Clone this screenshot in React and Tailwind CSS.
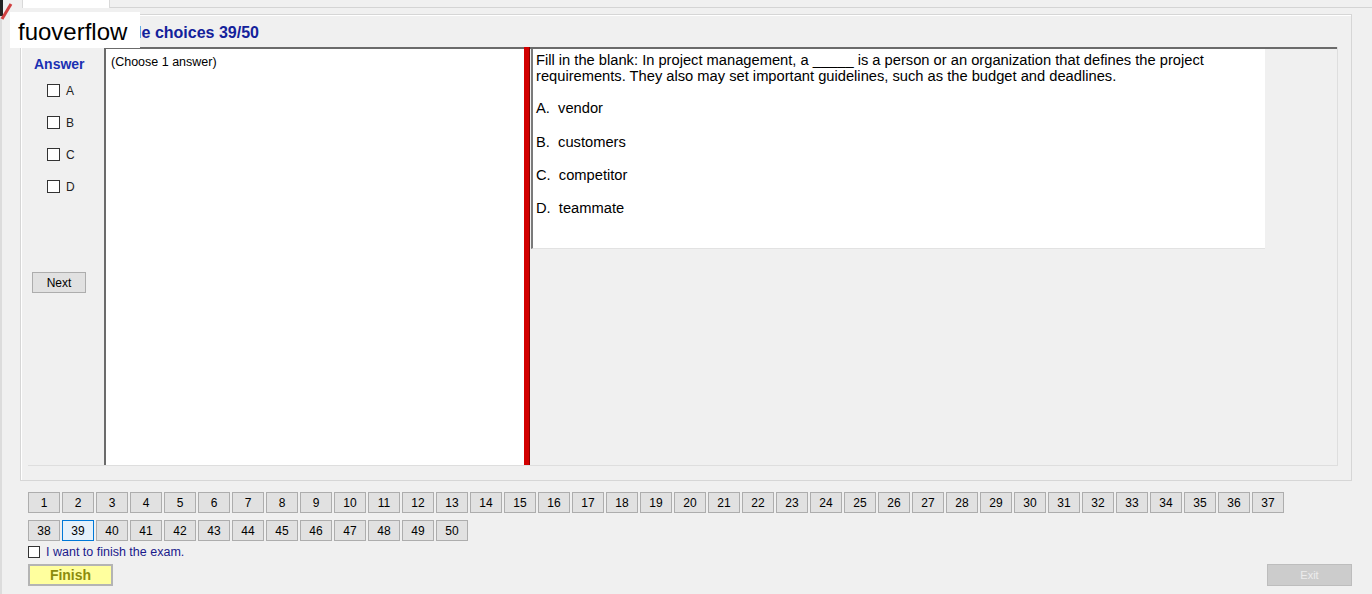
import React from 'react'

const nums = Array.from({ length: 50 }, (_, i) => i + 1)

function NumBtn({ n, active }) {
  return (
    <button
      className={
        'w-[32px] h-[21px] text-[12px] leading-none text-black border ' +
        (active ? 'bg-[#e5f1fb] border-[#0078d7]' : 'bg-[#e1e1e1] border-[#adadad]')
      }
    >
      {n}
    </button>
  )
}

function Check({ label }) {
  return (
    <div className="flex items-center h-[13px] pl-[19px] mb-[19px]">
      <span className="w-[13px] h-[13px] border border-[#333] bg-white" />
      <span className="ml-[6px] text-[12px] text-[#222]">{label}</span>
    </div>
  )
}

export default function App() {
  return (
    <div className="relative w-[1372px] h-[594px] overflow-hidden bg-[#f0f0f0] font-['Liberation_Sans',Arial,sans-serif] flex flex-col">
      {/* tab strip */}
      <div className="flex h-[8px] shrink-0">
        <div className="w-[22px]" />
        <div className="w-[88px] bg-white border-x border-[#d9d9d9]" />
        <div className="flex-1 border-b border-[#d4d4d4]" />
      </div>

      <div className="flex-1 flex flex-col border-l-[2px] border-[#dcdcdc]">
        {/* group box */}
        <div className="ml-[18px] mt-[6px] w-[1332px] h-[467px] border border-[#d6d6d6] shadow-[inset_1px_1px_0_#fff] flex flex-col">
          <div className="h-[32px] pl-[69px] pt-[9px] text-[16px] font-bold text-[#13219b] leading-[18px]">
            Multiple choices 39/50
          </div>

          <div className="ml-[7px] w-[1310px] h-[419px] flex border-b border-r border-[#dedede]">
            {/* answer column */}
            <div className="w-[76px] flex flex-col pt-[9px]">
              <div className="pl-[6px] text-[14px] font-bold text-[#1b30b3] leading-[16px] mb-[11px]">Answer</div>
              <div className="mt-[1px]">
                <Check label="A" />
                <Check label="B" />
                <Check label="C" />
                <Check label="D" />
              </div>
              <button className="ml-[4px] mt-[60px] w-[54px] h-[21px] bg-[#e1e1e1] border border-[#adadad] text-[12px] text-black">
                Next
              </button>
            </div>

            {/* choose box */}
            <div className="w-[420px] bg-white border-l-2 border-t-2 border-[#6b6b6b] pl-[5px] pt-[6px] text-[12.5px] text-black leading-[14px]">
              (Choose 1 answer)
            </div>

            {/* splitter */}
            <div className="w-[6px] bg-[#d20000] border-r border-[#8a0000]" />

            {/* question area */}
            <div className="flex-1 border-t-2 border-[#6b6b6b] pl-[1px]">
              <div className="w-[734px] h-[200px] bg-white border-l-2 border-b border-l-[#7a7a7a] border-b-[#e2e2e2] pl-[3px] pt-[3px] text-[14.7px] leading-[16px] text-black">
                <div>
                  Fill in the blank: In project management, a _____ is a person or an organization that defines the project
                  <br />
                  requirements. They also may set important guidelines, such as the budget and deadlines.
                </div>
                <div className="mt-[16px] whitespace-pre">A.  vendor</div>
                <div className="mt-[18px] whitespace-pre">B.  customers</div>
                <div className="mt-[17px] whitespace-pre">C.  competitor</div>
                <div className="mt-[17px] whitespace-pre">D.  teammate</div>
              </div>
            </div>
          </div>
        </div>

        {/* question numbers */}
        <div className="pl-[26px] mt-[11px] flex flex-col gap-[7px]">
          <div className="flex gap-[2px]">
            {nums.slice(0, 37).map((n) => (
              <NumBtn key={n} n={n} />
            ))}
          </div>
          <div className="flex gap-[2px]">
            {nums.slice(37).map((n) => (
              <NumBtn key={n} n={n} active={n === 39} />
            ))}
          </div>
        </div>

        <div className="pl-[26px] mt-[4px] flex items-center h-[14px]">
          <span className="w-[12px] h-[12px] border border-[#333] bg-white" />
          <span className="ml-[6px] text-[12.5px] text-[#1a1a8c]">I want to finish the exam.</span>
        </div>

        <div className="pl-[26px] pr-[20px] mt-[5px] flex justify-between">
          <button className="w-[85px] h-[22px] bg-[#ffff9e] border-2 border-[#b4b4b4] text-[14px] font-bold text-[#8c8c0c] leading-none">
            Finish
          </button>
          <button className="w-[85px] h-[22px] bg-[#cccccc] border border-[#bdbdbd] text-[11px] text-[#ececec] leading-none">
            Exit
          </button>
        </div>
      </div>

      {/* corner marks */}
      <svg className="absolute left-0 top-0" width="14" height="22" viewBox="0 0 14 22">
        <rect x="0" y="0" width="3" height="16" fill="#222" />
        <line x1="2" y1="19" x2="11" y2="4" stroke="#d04040" strokeWidth="3" />
      </svg>

      {/* watermark */}
      <div className="absolute left-[10px] top-[12px] w-[130px] h-[36px] bg-white pl-[8px] pt-[2px] text-[24px] leading-[36px] text-black font-['Liberation_Sans',Arial,sans-serif]">
        fuoverflow
      </div>
    </div>
  )
}
